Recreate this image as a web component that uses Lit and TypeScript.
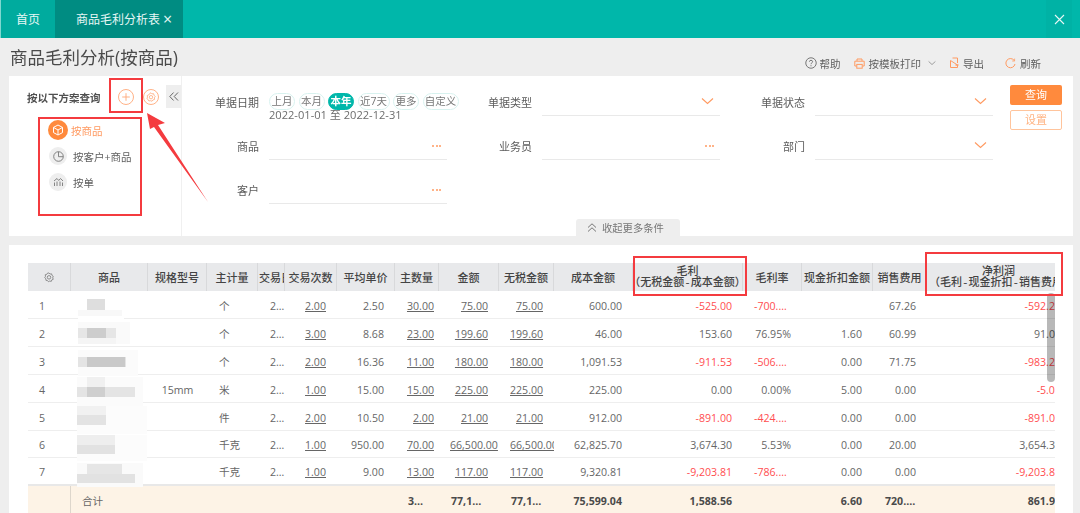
import { LitElement, html, css, svg } from "lit";
import { customElement } from "lit/decorators.js";

const COLS = css`43px 77px 59px 51px 27px 52px 58px 44px 60px 55px 79px 110px 59px 71px 54px 143px`;

type Row = string[];
const ROWS: Row[] = [
  ["1", "", "", "个", "2022-01-01", "2.00", "2.50", "30.00", "75.00", "75.00", "600.00", "-525.00", "-700.00%", "", "67.26", "-592.26"],
  ["2", "", "", "个", "2022-01-02", "3.00", "8.68", "23.00", "199.60", "199.60", "46.00", "153.60", "76.95%", "1.60", "60.99", "91.01"],
  ["3", "", "", "个", "2022-01-03", "2.00", "16.36", "11.00", "180.00", "180.00", "1,091.53", "-911.53", "-506.41%", "0.00", "71.75", "-983.28"],
  ["4", "", "15mm", "米", "2022-01-04", "1.00", "15.00", "15.00", "225.00", "225.00", "225.00", "0.00", "0.00%", "5.00", "0.00", "-5.00"],
  ["5", "", "", "件", "2022-01-05", "2.00", "10.50", "2.00", "21.00", "21.00", "912.00", "-891.00", "-424.29%", "0.00", "0.00", "-891.00"],
  ["6", "", "", "千克", "2022-01-06", "1.00", "950.00", "70.00", "66,500.00", "66,500.00", "62,825.70", "3,674.30", "5.53%", "0.00", "20.00", "3,654.30"],
  ["7", "", "", "千克", "2022-01-07", "1.00", "9.00", "13.00", "117.00", "117.00", "9,320.81", "-9,203.81", "-786.65%", "0.00", "0.00", "-9,203.81"],
];
const TOTAL: Row = ["", "合计", "", "", "", "", "", "317.00", "77,113.60", "77,113.60", "75,599.04", "1,588.56", "", "6.60", "720.00", "861.96"];
const CELL = ["idx", "name", "spec", "unit", "trade", "num", "num", "qty", "num amt", "num amt", "num", "num", "num", "num", "num", "num net"];
const LINKED = new Set([5, 7, 8, 9]);
const RED = new Set([11, 12, 15]);
const CHIPS: [string, number][] = [["上月", 26], ["本月", 26], ["本年", 26], ["近7天", 32], ["更多", 26], ["自定义", 36]];

// Mosaic blocks that hide the product names: x, y, w, h, colour.
const MOSAIC: [number, number, number, number, string][] = [
  [78, 298, 46, 22, "#ffffff"], [87, 299, 18, 11, "#dedede"], [78, 310, 44, 6, "#f8f8f8"],
  [78, 322, 52, 22, "#fafafa"], [78, 328, 38, 10, "#e6e6e6"], [87, 328, 19, 10, "#cdcdcd"], [78, 338, 38, 6, "#f5f5f5"],
  [78, 350, 60, 26, "#fbfbfb"], [78, 357, 48, 10, "#e4e4e4"], [87, 357, 38, 10, "#c9c9c9"],
  [77, 377, 66, 30, "#fbfbfb"], [87, 377, 18, 10, "#f0f0f0"], [77, 387, 58, 10, "#e4e4e4"], [87, 387, 18, 10, "#cfcfcf"],
  [77, 406, 70, 28, "#fcfcfc"], [77, 406, 29, 9, "#f1f1f1"], [77, 415, 29, 10, "#e3e3e3"],
  [77, 435, 70, 26, "#fcfcfc"], [77, 435, 38, 10, "#eeeeee"], [77, 445, 38, 9, "#e2e2e2"],
  [77, 463, 66, 24, "#fafafa"], [87, 464, 35, 10, "#e6e6e6"], [77, 474, 58, 9, "#e2e2e2"],
];

const chev = svg`<polyline points="1,1 6.5,6 12,1" fill="none" stroke="currentColor" stroke-width="1.1"/>`;

@customElement("app-root")
export class AppRoot extends LitElement {
  static styles = css`
    :host { display: block; position: relative; width: 1080px; height: 513px; overflow: hidden; background: #eeeeee;
      font-family: "Open Sans", "Noto Sans CJK SC", sans-serif; font-size: 10.6px; color: #666; }
    .page { filter: blur(0.35px); height: 513px; }
    svg { display: block; }
    .topbar { display: flex; height: 38px; background: #00b7aa; border-left: 1px solid #7fd8d0; color: #e6f7f5; font-size: 12px; }
    .tab { display: flex; align-items: center; }
    .home { width: 54px; padding-left: 15px; box-sizing: border-box; background: #00ab9e; }
    .active { width: 128px; padding-left: 21px; box-sizing: border-box; background: #008c82; gap: 3px; }
    .x { font-size: 16px; line-height: 16px; }
    .close { margin-left: auto; width: 26px; margin-right: 8px; background: #00b2a5; display: flex; align-items: center; justify-content: center; }
    .titlerow { display: flex; height: 38px; align-items: center; padding: 0 39px 0 10px; }
    h1 { margin: 0 auto 0 0; font-size: 17.5px; font-weight: 400; color: #4a4a4a; position: relative; top: -1px; white-space: nowrap; }
    .tool { display: flex; align-items: center; gap: 4px; position: relative; top: 6px; color: #5e5e5e; font-size: 10.5px; }
    .tool.t1 { gap: 3px; }
    .tool.t2 { margin-left: 13px; }
    .tool.t3 { margin-left: 13px; }
    .tool.t4 { margin-left: 21px; }
    .tchev { color: #777; margin-left: 3px; }
    .panel { margin: 0 7px 0 9px; background: #fff; display: flex; height: 160px; }
    .side { width: 173px; box-sizing: border-box; border-right: 1px solid #f0f0f0; padding: 9px 0 0 18px; flex: none; }
    .shead { display: flex; align-items: center; height: 23px; }
    .shead b { width: 72px; color: #505050; font-size: 10.5px; white-space: nowrap; font-weight: 700; padding-top: 2px; }
    .cbtn { width: 16px; height: 16px; margin: 1px 0 0 9px; color: #ffa878; }
    .cbtn.first { margin-left: 19px; }
    .fold { margin-left: 7px; width: 15px; height: 23px; background: #eeeeee; display: flex; align-items: center; justify-content: center; color: #666; }
    .plans { margin-top: 9px; padding-left: 21px; }
    .plan { height: 26px; display: flex; align-items: center; gap: 6px; margin-left: 1px; white-space: nowrap; color: #5e5e5e; font-size: 10.5px; }
    .plan.on { color: #ff9a61; gap: 3px; margin-left: 0; }
    .pi { width: 18px; height: 18px; border-radius: 50%; background: #eeeeee; color: #777; display: flex; align-items: center; justify-content: center; }
    .on .pi { width: 20px; height: 20px; background: #ff8a3d; color: #fff; }
    .main { width: 811px; display: flex; flex-direction: column; padding-top: 17px; box-sizing: border-box; flex: none; }
    .form { display: grid; grid-template-columns: repeat(3, 265px); column-gap: 8px; row-gap: 21px; grid-auto-rows: 23px; }
    .f { display: grid; grid-template-columns: 77px 178px; column-gap: 10px; }
    .lbl { text-align: right; line-height: 20px; color: #5c5c5c; font-size: 11px; }
    .val { border-bottom: 1px solid #e9e9e9; display: flex; justify-content: flex-end; padding: 0 6px; color: #ff9a61; align-items: center; box-sizing: border-box; height: 23px; }
    .val.up { align-items: flex-start; padding-top: 4px; }
    .dots { display: flex; gap: 1.5px; position: relative; top: -2px; }
    .dots i { width: 2px; height: 2px; border-radius: 50%; background: #ff9a61; }
    .date { height: 23px; }
    .chips { display: flex; gap: 3.5px; }
    .chip { flex: none; height: 17px; box-sizing: border-box; border: 1px solid #d8f2ef; border-radius: 9px; line-height: 15px; font-size: 10.5px; color: #777; white-space: nowrap; text-align: center; }
    .chip.sel { background: #00b7aa; color: #fff; border-color: #00b7aa; font-weight: 700; }
    .range { font-size: 11.1px; line-height: 11px; margin-top: -1px; color: #6c6c6c; white-space: nowrap; }
    .collapse { margin: auto 0 0 394px; width: 104px; height: 17px; background: #eeeeee; border-radius: 3px 3px 0 0; display: flex; align-items: center; gap: 5px; padding-left: 11px; box-sizing: border-box; color: #777; font-size: 10.3px; }
    .btns { margin: 9px 0 0 17px; display: flex; flex-direction: column; gap: 5px; }
    .btn { width: 52px; height: 20px; box-sizing: border-box; border-radius: 2px; text-align: center; line-height: 20px; font-size: 11px; background: #ff8a3d; color: #fff; }
    .btn.ghost { background: #fff; border: 1px solid #ffc49c; color: #ffb483; line-height: 18px; }
    .tpanel { margin: 9px 7px 0 9px; background: #fff; height: 268px; padding: 18px 18px 0 19px; box-sizing: border-box; }
    .tablewrap { width: 1027px; overflow: hidden; height: 250px; }
    .r { display: grid; grid-template-columns: ${COLS}; width: 1070px; height: 28px; border-bottom: 1px solid #eeeeee; box-sizing: border-box; align-items: center; }
    .r.r6 { height: 27px; }
    .r.r7 { border-bottom: 2px solid #e8e8e8; }
    .hd { background: #e8e9eb; border: 0; height: 28px; color: #444; align-items: stretch; }
    .hd > div { border-right: 1px solid #d8d9db; display: flex; flex-direction: column; align-items: center; justify-content: center; white-space: nowrap; overflow: hidden; font-size: 11px; line-height: 11px; font-weight: 500; }
    .hd > div:last-child { border-right: 0; }
    .hd > .hleft { align-items: flex-start; padding-left: 1px; }
    .hd .sub { font-family: "Liberation Mono", "Noto Sans CJK SC", monospace; line-height: 12px; margin-top: 1px; }
    .hd .sub.nsub { margin-left: 6px; }
    .hgear { color: #777; }
    .c { white-space: nowrap; overflow: hidden; text-overflow: ellipsis; line-height: 16px; box-sizing: border-box; padding-top: 2px; }
    .num { text-align: right; padding: 2px 11px 0; }
    .amt { text-overflow: clip; }
    .net { padding-right: 9px; }
    .qty { text-align: right; padding: 2px 5px 0 6px; }
    .idx { padding-left: 11px; }
    .spec { text-align: center; }
    .unit { padding-left: 12px; }
    .trade { padding-left: 12px; }
    .name { padding-left: 11px; }
    .u { text-decoration: underline; text-underline-offset: 1px; }
    .red { color: #ff4d4f; }
    .tot { background: #fdf3e6; border: 0; height: 27px; color: #4a4a4a; font-weight: 700; }
    .tot .name { font-weight: 400; color: #666; }
    .tot .idx { border-right: 1px solid #ddd6cc; height: 27px; }
    .tot .qty { padding: 2px 11px 0 13px; }
    .tot .num { padding-left: 12px; text-overflow: ellipsis; }
    .tot .amt:nth-child(9) { padding-right: 16px; }
    .scroll { position: absolute; left: 1047px; top: 293px; width: 8px; height: 89px; border-radius: 4px; background: rgba(0, 0, 0, 0.28); }
    .mosaic { position: absolute; inset: 0; pointer-events: none; }
    .mosaic i { position: absolute; display: block; }
    .box { position: absolute; border: 2px solid #f43b3f; box-sizing: border-box; }
    .b1 { left: 109px; top: 78px; width: 34px; height: 35px; }
    .b2 { left: 38px; top: 117px; width: 104px; height: 99px; }
    .b3 { left: 633px; top: 256px; width: 114px; height: 40px; }
    .b4 { left: 925px; top: 252px; width: 138px; height: 44px; }
    .arrow { position: absolute; left: 140px; top: 108px; }
  `;

  private gear(size = 16) {
    return html`<svg class="hgear" width=${size} height=${size} viewBox="0 0 16 16" fill="none" stroke="currentColor"><path d="M8 3.4 9.2 4.6 11 4.4 11.4 6.2 12.9 7.3 12.2 9 12.9 10.6 11.2 11.3 10.6 13 8.9 12.6 7.3 13.4 6.2 12 4.5 11.8 4.4 10 3.1 8.8 4 7.2 3.7 5.4 5.4 5 6.4 3.5Z" stroke-width="0.9"/><circle cx="8" cy="8.4" r="2" stroke-width="0.9"/></svg>`;
  }

  private field(label: string, kind: "dots" | "chev") {
    return html`<div class="f"><div class="lbl">${label}</div><div class="val ${kind === "chev" ? "up" : ""}">
      ${kind === "dots"
        ? html`<span class="dots"><i></i><i></i><i></i></span>`
        : html`<svg width="13" height="8" viewBox="0 0 13 7">${chev}</svg>`}
    </div></div>`;
  }

  private row(r: Row, i: number) {
    return html`<div class="r ${i === 5 ? "r6" : ""} ${i === 6 ? "r7" : ""}">
      ${r.map((v, c) => html`<div class="c ${CELL[c]} ${RED.has(c) && v.startsWith("-") ? "red" : ""}">${LINKED.has(c) ? html`<span class="u">${v}</span>` : v}</div>`)}
    </div>`;
  }

  render() {
    return html`<div class="page">
      <div class="topbar">
        <div class="tab home">首页</div>
        <div class="tab active">商品毛利分析表<span class="x">×</span></div>
        <div class="close"><svg width="11" height="11" viewBox="0 0 11 11" stroke="#e6f7f5" stroke-width="1.1"><path d="M1 1 10 10M10 1 1 10"/></svg></div>
      </div>
      <div class="titlerow">
        <h1>商品毛利分析(按商品)</h1>
        <span class="tool t1"><svg width="12" height="12" viewBox="0 0 11 11" fill="none" stroke="#666" stroke-width="0.8"><circle cx="5.5" cy="5.5" r="4.8"/><path d="M4 4.3C4 2.6 7 2.6 7 4.3 7 5.4 5.5 5.3 5.5 6.6M5.5 7.5V8.5"/></svg>帮助</span>
        <span class="tool t2"><svg width="11" height="11" viewBox="0 0 11 11" fill="none" stroke="#ff9a61" stroke-width="1"><path d="M3 3V1H8V3M2.5 8H.8V3.2H10.2V8H8.5"/><rect x="2.8" y="6.4" width="5.4" height="3.8"/></svg>按模板打印<svg class="tchev" width="8" height="6" viewBox="0 0 13 7">${chev}</svg></span>
        <span class="tool t3"><svg width="10" height="12" viewBox="0 0 10 12" fill="none" stroke="#ff9a61" stroke-width="1"><path d="M3.5 1H8.5V6M8.5 8V10.5H1.5V3.5Z"/><path d="M6.5 8H9.5" stroke-width="1.4"/></svg>导出</span>
        <span class="tool t4"><svg width="11" height="11" viewBox="0 0 11 11" fill="none" stroke="#ff9a61" stroke-width="1"><path d="M9.3 2.6A4.6 4.6 0 1 0 10 6"/><path d="M9.6 .6V3H7.2" stroke-width=".8"/></svg>刷新</span>
      </div>

      <div class="panel">
        <div class="side">
          <div class="shead">
            <b>按以下方案查询</b>
            <span class="cbtn first"><svg width="16" height="16" viewBox="0 0 16 16" fill="none" stroke="currentColor" stroke-width=".9"><circle cx="8" cy="8" r="7.5"/><path d="M8 4.2V11.8M4.2 8H11.8"/></svg></span>
            <span class="cbtn"><svg width="16" height="16" viewBox="0 0 16 16" fill="none" stroke="currentColor" stroke-width=".9"><circle cx="8" cy="8" r="7.5"/><path d="M8 3.8 9 4.9 10.6 4.7 11 6.2 12.2 7.4 11.4 8.8 11.6 10.4 10 10.9 9 12.2 7.4 11.7 5.9 12 5.2 10.6 3.9 9.7 4.5 8.1 4.2 6.5 5.7 6 6.6 4.6Z" stroke-width=".8"/><circle cx="8" cy="8.2" r="1.7" stroke-width=".8"/></svg></span>
            <span class="fold"><svg width="10" height="9" viewBox="0 0 10 9" fill="none" stroke="currentColor" stroke-width="1"><path d="M4.6 .5.8 4.5 4.6 8.5M9 .5 5.2 4.5 9 8.5"/></svg></span>
          </div>
          <div class="plans">
            <div class="plan on"><span class="pi"><svg width="12" height="12" viewBox="0 0 12 12" fill="none" stroke="currentColor" stroke-width="1"><path d="M6 1 10.5 3.4V8.6L6 11 1.5 8.6V3.4ZM1.5 3.4 6 6 10.5 3.4M6 6V11"/></svg></span>按商品</div>
            <div class="plan"><span class="pi"><svg width="11" height="11" viewBox="0 0 11 11" fill="none" stroke="currentColor" stroke-width=".9"><circle cx="5.5" cy="5.5" r="4.8"/><path d="M5.5 .8V5.7H10.2"/></svg></span>按客户+商品</div>
            <div class="plan"><span class="pi"><svg width="11" height="10" viewBox="0 0 11 10" fill="none" stroke="currentColor" stroke-width=".9"><path d="M1 4 4 1.5 5.7 3.5 7.5 1.5 10 4M1.5 9V5.5M4 9V4.5M7 9V4.5M9.5 9V5.5"/></svg></span>按单</div>
          </div>
        </div>

        <div class="main">
          <div class="form">
            <div class="f"><div class="lbl">单据日期</div>
              <div class="date">
                <div class="chips">${CHIPS.map(([c, w]) => html`<span class="chip ${c === "本年" ? "sel" : ""}" style="width:${w}px">${c}</span>`)}</div>
                <div class="range">2022-01-01 至 2022-12-31</div>
              </div>
            </div>
            ${this.field("单据类型", "chev")}
            ${this.field("单据状态", "chev")}
            ${this.field("商品", "dots")}
            ${this.field("业务员", "dots")}
            ${this.field("部门", "chev")}
            ${this.field("客户", "dots")}
          </div>
          <div class="collapse"><svg width="10" height="9" viewBox="0 0 10 9" fill="none" stroke="currentColor" stroke-width="1"><path d="M1 4.5 5 .8 9 4.5M1 8.5 5 4.8 9 8.5"/></svg>收起更多条件</div>
        </div>

        <div class="btns"><div class="btn">查询</div><div class="btn ghost">设置</div></div>
      </div>

      <div class="tpanel">
        <div class="tablewrap">
          <div class="r hd">
            <div>${this.gear(14)}</div><div>商品</div><div>规格型号</div><div>主计量</div><div class="hleft">交易日期</div><div>交易次数</div><div>平均单价</div><div>主数量</div><div>金额</div><div>无税金额</div><div>成本金额</div>
            <div><span>毛利</span><span class="sub">（无税金额-成本金额）</span></div>
            <div>毛利率</div><div>现金折扣金额</div><div>销售费用</div>
            <div><span>净利润</span><span class="sub nsub">（毛利-现金折扣-销售费用）</span></div>
          </div>
          ${ROWS.map((r, i) => this.row(r, i))}
          <div class="r tot">
            ${TOTAL.map((v, c) => html`<div class="c ${CELL[c]}">${v}</div>`)}
          </div>
        </div>
      </div>

      <div class="mosaic">${MOSAIC.map(([x, y, w, h, col]) => html`<i style="left:${x}px;top:${y}px;width:${w}px;height:${h}px;background:${col}"></i>`)}</div>
      <div class="scroll"></div>
      <div class="box b1"></div>
      <div class="box b2"></div>
      <div class="box b3"></div>
      <div class="box b4"></div>
      <svg class="arrow" width="72" height="98" viewBox="140 108 72 98"><polygon points="147,113 165,123 158,125 208,202 154,127 150,129" fill="#f43b3f"/></svg>
    </div>`;
  }
}
